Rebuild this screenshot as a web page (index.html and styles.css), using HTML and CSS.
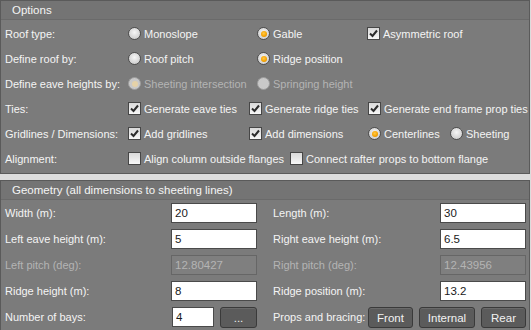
FILE: index.html
```html
<!DOCTYPE html>
<html lang="en">
<head>
  <meta charset="UTF-8">
  <title>Portal Frame Options</title>
  <link rel="stylesheet" href="styles.css">
</head>
<body>
  <section class="panel options">
    <header class="panel-head">Options</header>
    <div class="panel-body">
      <div class="row">
        <span class="label">Roof type:</span>
        <span class="opt w129"><i class="radio"></i>Monoslope</span>
        <span class="opt w110"><i class="radio on"></i>Gable</span>
        <span class="opt"><i class="check on"><svg viewBox="0 0 11 11"><path d="M2 5.5 L4.5 8 L9 2.5"/></svg></i>Asymmetric roof</span>
      </div>
      <div class="row">
        <span class="label">Define roof by:</span>
        <span class="opt w129"><i class="radio"></i>Roof pitch</span>
        <span class="opt w110"><i class="radio on"></i>Ridge position</span>
      </div>
      <div class="row">
        <span class="label">Define eave heights by:</span>
        <span class="opt w129 off"><i class="radio on"></i>Sheeting intersection</span>
        <span class="opt w110 off"><i class="radio"></i>Springing height</span>
      </div>
      <div class="row">
        <span class="label">Ties:</span>
        <span class="opt w121"><i class="check on"><svg viewBox="0 0 11 11"><path d="M2 5.5 L4.5 8 L9 2.5"/></svg></i>Generate eave ties</span>
        <span class="opt w119"><i class="check on"><svg viewBox="0 0 11 11"><path d="M2 5.5 L4.5 8 L9 2.5"/></svg></i>Generate ridge ties</span>
        <span class="opt"><i class="check on"><svg viewBox="0 0 11 11"><path d="M2 5.5 L4.5 8 L9 2.5"/></svg></i>Generate end frame prop ties</span>
      </div>
      <div class="row">
        <span class="label">Gridlines / Dimensions:</span>
        <span class="opt w121"><i class="check on"><svg viewBox="0 0 11 11"><path d="M2 5.5 L4.5 8 L9 2.5"/></svg></i>Add gridlines</span>
        <span class="opt w119"><i class="check on"><svg viewBox="0 0 11 11"><path d="M2 5.5 L4.5 8 L9 2.5"/></svg></i>Add dimensions</span>
        <span class="opt w82"><i class="radio on"></i>Centerlines</span>
        <span class="opt"><i class="radio"></i>Sheeting</span>
      </div>
      <div class="row">
        <span class="label">Alignment:</span>
        <span class="opt w162"><i class="check"></i>Align column outside flanges</span>
        <span class="opt"><i class="check"></i>Connect rafter props to bottom flange</span>
      </div>
    </div>
  </section>

  <section class="panel geometry">
    <header class="panel-head">Geometry (all dimensions to sheeting lines)</header>
    <div class="panel-body grid">
      <div class="field"><span>Width (m):</span><input class="box" value="20"></div>
      <div class="field"><span>Length (m):</span><input class="box" value="30"></div>
      <div class="field"><span>Left eave height (m):</span><input class="box" value="5"></div>
      <div class="field"><span>Right eave height (m):</span><input class="box" value="6.5"></div>
      <div class="field off"><span>Left pitch (deg):</span><input class="box" value="12.80427" disabled></div>
      <div class="field off"><span>Right pitch (deg):</span><input class="box" value="12.43956" disabled></div>
      <div class="field"><span>Ridge height (m):</span><input class="box" value="8"></div>
      <div class="field"><span>Ridge position (m):</span><input class="box" value="13.2"></div>
      <div class="field">
        <span>Number of bays:</span>
        <div class="combo"><input class="box small" value="4"><button class="btn dots">...</button></div>
      </div>
      <div class="field">
        <span>Props and bracing:</span>
        <div class="combo"><button class="btn w45">Front</button><button class="btn w56">Internal</button><button class="btn w45">Rear</button></div>
      </div>
    </div>
  </section>
</body>
</html>
```

FILE: styles.css
```css
:root {
  --panel: #7b7b7b;
  --panel-head: #747474;
  --edge: #5a5a5a;
  --text: #f4f4f4;
  --text-off: #b4b4b4;
  --orange: #f7a400;
}
*, *::before, *::after {box-sizing: border-box; margin: 0}
body {
  background: #dcdcdc;
  font-family: 'Liberation Sans', Arial, sans-serif;
  font-size: 11px;
  color: var(--text);
  width: 531px;
}
.panel {
  width: 530px;
  background: var(--panel);
  border: 1px solid var(--edge);
}
.options {height: 174px}
.geometry {
  margin-top: 6px;
  height: 152px;
}
.panel-head {
  height: 19px;
  line-height: 18px;
  padding-left: 11px;
  font-size: 11.5px;
  background: var(--panel-head);
  border-bottom: 1px solid #6a6a6a;
}
.options .panel-body {padding: 1px 0 0 4px}
.row {
  height: 25px;
  display: flex;
  align-items: center;
}
.row .label {width: 123px}
.opt {
  display: flex;
  align-items: center;
  gap: 3px;
  white-space: nowrap;
}
.w129 {width: 129px}
.w110 {width: 110px}
.w121 {width: 121px}
.w119 {width: 119px}
.w82 {width: 82px}
.w162 {width: 162px}
.opt.off, .field.off span {color: var(--text-off)}

.radio {
  width: 13px;
  height: 13px;
  border-radius: 50%;
  border: 1px solid #4e4e4e;
  background: radial-gradient(circle at 50% 40%, #f6f6f6 0, #d2d2d2 70%, #bcbcbc 100%);
  position: relative;
  flex: none;
}
.radio.on::after {
  content: "";
  position: absolute;
  left: 2.5px;
  top: 2.5px;
  width: 6px;
  height: 6px;
  border-radius: 50%;
  background: radial-gradient(circle at 45% 40%, #ffc94a 0, var(--orange) 55%, #c47800 100%);
}
.off .radio {
  border-color: #9c9c9c;
  background: #c9c9c9;
}
.off .radio.on::after {background: #e5d2a8}

.check {
  width: 13px;
  height: 13px;
  border: 1px solid #464646;
  background: linear-gradient(#d9d9d9, #f7f7f7);
  flex: none;
  display: grid;
  place-items: center;
}
.check svg {
  width: 11px;
  height: 11px;
}
.check path {
  fill: none;
  stroke: #2b2b2b;
  stroke-width: 2;
}

.grid {
  display: grid;
  grid-template-columns: 252px 253px;
  column-gap: 16px;
  padding: 3px 0 0 4px;
}
.field {
  height: 26px;
  display: flex;
  align-items: flex-start;
  justify-content: space-between;
}
.field span {padding-top: 4px}
.box {
  width: 86px;
  height: 20px;
  border: 1px solid #4a4a4a;
  background: #fff;
  color: #1a1a1a;
  font: inherit;
  font-size: 11.5px;
  padding: 0 3px;
  outline: none;
}
.box:disabled {
  background: #7f7f7f;
  border-color: #666;
  color: var(--text-off);
}
.box.small {width: 42px}
.combo {
  display: flex;
  gap: 6px;
}
.btn {
  height: 21px;
  background: #5b5b5b;
  border: 1px solid #3a3a3a;
  border-radius: 3px;
  color: #f2f2f2;
  font: inherit;
  font-size: 11.5px;
  padding: 0;
  box-shadow: inset 0 1px 0 #6a6a6a;
}
.dots {width: 37px}
.w45 {width: 45px}
.w56 {width: 56px}
```
